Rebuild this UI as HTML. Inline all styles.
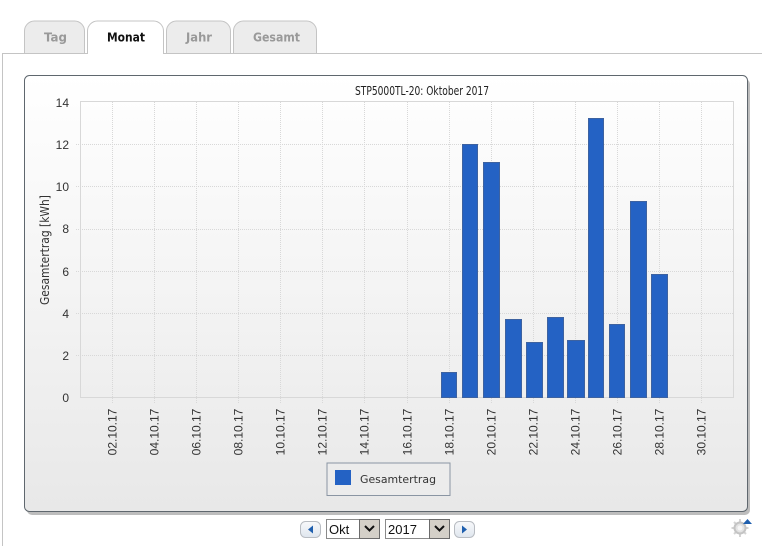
<!DOCTYPE html>
<html><head><meta charset="utf-8"><style>
html,body{margin:0;padding:0;width:762px;height:546px;overflow:hidden;background:#fff}
svg{display:block}
text{font-family:"Liberation Sans",sans-serif;fill:#333}
.t{font-family:"DejaVu Sans",sans-serif;font-weight:bold;font-size:12px;fill:#999;text-anchor:middle}
.d{font-family:"DejaVu Sans",sans-serif}
.y{font-size:12px;text-anchor:end;fill:#333}
.x{font-size:12px;fill:#333;text-anchor:middle}
.g{stroke:#d8d8d8;stroke-width:1;stroke-dasharray:1 1;fill:none}
.tab{fill:#ececec;stroke:#c4c4c4;stroke-width:1}
.b{fill:#2462c4;stroke:#3d62a0;stroke-width:1}
</style></head><body>
<svg width="762" height="546" viewBox="0 0 762 546" xmlns="http://www.w3.org/2000/svg">
<defs>
<linearGradient id="p" x1="0" y1="0" x2="0" y2="1"><stop offset="0" stop-color="#fff"/><stop offset="1" stop-color="#e8e8e8"/></linearGradient>
<linearGradient id="btn" x1="0" y1="0" x2="0" y2="1"><stop offset="0" stop-color="#f8f9fb"/><stop offset="1" stop-color="#dfe6ee"/></linearGradient>
</defs>
<path d="M2.500 546V53.500H762" fill="none" stroke="#c4c4c4"/>
<path class="tab" d="M24.500 53V31a10 10 0 0 1 10-10h40a10 10 0 0 1 10 10v22"/>
<path class="tab" d="M166.500 53V31a10 10 0 0 1 10-10h44a10 10 0 0 1 10 10v22"/>
<path class="tab" d="M233.500 53V31a10 10 0 0 1 10-10h63a10 10 0 0 1 10 10v22"/>
<path d="M87.500 54V31a10 10 0 0 1 10-10h56a10 10 0 0 1 10 10v23" fill="#fff" stroke="#c4c4c4"/>
<text class="t" x="55.500" y="41.500" textLength="23" lengthAdjust="spacingAndGlyphs">Tag</text>
<text class="t" x="126" y="41.500" textLength="38" lengthAdjust="spacingAndGlyphs" style="fill:#111">Monat</text>
<text class="t" x="199" y="41.500" textLength="26" lengthAdjust="spacingAndGlyphs">Jahr</text>
<text class="t" x="276.500" y="41.500" textLength="47" lengthAdjust="spacingAndGlyphs">Gesamt</text>

<rect x="27" y="79" width="723" height="436" rx="5" fill="#bdbdbd"/>
<rect x="24.500" y="75.500" width="723" height="436" rx="5" fill="url(#p)" stroke="#5f676e"/>
<text class="d" x="355" y="95" textLength="134" lengthAdjust="spacingAndGlyphs" style="font-size:12px;fill:#222">STP5000TL-20: Oktober 2017</text>

<rect x="80.500" y="101.500" width="653" height="296" fill="none" stroke="#d8d8d8"/>
<path class="g" d="M76 144.500H734M76 186.500H734M76 229.500H734M76 271.500H734M76 313.500H734M76 355.500H734"/>
<path class="g" d="M112.500 102V403M154.500 102V403M196.500 102V403M238.500 102V403M280.500 102V403M322.500 102V403M364.500 102V403M407.500 102V403M449.500 102V403M491.500 102V403M533.500 102V403M575.500 102V403M617.500 102V403M659.500 102V403M701.500 102V403"/>

<text class="y" x="69" y="107">14</text>
<text class="y" x="69" y="149">12</text>
<text class="y" x="69" y="191">10</text>
<text class="y" x="69" y="233">8</text>
<text class="y" x="69" y="276">6</text>
<text class="y" x="69" y="318">4</text>
<text class="y" x="69" y="360">2</text>
<text class="y" x="69" y="402">0</text>
<text class="d" x="0" y="0" transform="translate(49,305) rotate(-90)" textLength="110" lengthAdjust="spacingAndGlyphs" style="font-size:12px;fill:#333">Gesamtertrag [kWh]</text>

<rect class="b" x="441.500" y="372.500" width="15" height="25"/>
<rect class="b" x="462.500" y="144.500" width="15" height="253"/>
<rect class="b" x="483.500" y="162.500" width="16" height="235"/>
<rect class="b" x="505.500" y="319.500" width="16" height="78"/>
<rect class="b" x="526.500" y="342.500" width="16" height="55"/>
<rect class="b" x="547.500" y="317.500" width="16" height="80"/>
<rect class="b" x="567.500" y="340.500" width="17" height="57"/>
<rect class="b" x="588.500" y="118.500" width="15" height="279"/>
<rect class="b" x="609.500" y="324.500" width="15" height="73"/>
<rect class="b" x="630.500" y="201.500" width="16" height="196"/>
<rect class="b" x="651.500" y="274.500" width="16" height="123"/>

<g>
<text class="x" transform="translate(116.500,432) rotate(-90)">02.10.17</text>
<text class="x" transform="translate(158.500,432) rotate(-90)">04.10.17</text>
<text class="x" transform="translate(200.500,432) rotate(-90)">06.10.17</text>
<text class="x" transform="translate(242.500,432) rotate(-90)">08.10.17</text>
<text class="x" transform="translate(284.500,432) rotate(-90)">10.10.17</text>
<text class="x" transform="translate(326.500,432) rotate(-90)">12.10.17</text>
<text class="x" transform="translate(368.500,432) rotate(-90)">14.10.17</text>
<text class="x" transform="translate(411.500,432) rotate(-90)">16.10.17</text>
<text class="x" transform="translate(453.500,432) rotate(-90)">18.10.17</text>
<text class="x" transform="translate(495.500,432) rotate(-90)">20.10.17</text>
<text class="x" transform="translate(537.500,432) rotate(-90)">22.10.17</text>
<text class="x" transform="translate(579.500,432) rotate(-90)">24.10.17</text>
<text class="x" transform="translate(621.500,432) rotate(-90)">26.10.17</text>
<text class="x" transform="translate(663.500,432) rotate(-90)">28.10.17</text>
<text class="x" transform="translate(705.500,432) rotate(-90)">30.10.17</text>
</g>

<rect x="327" y="463" width="123" height="32.500" fill="#ececec" stroke="#8a95a3"/>
<rect x="335" y="470" width="16" height="15" fill="#2462c4"/>
<text class="d" x="360" y="483" textLength="76" lengthAdjust="spacingAndGlyphs" style="font-size:11px;fill:#333">Gesamtertrag</text>

<rect x="300.500" y="521.500" width="20" height="16" rx="5" fill="url(#btn)" stroke="#b8bcc2"/>
<path d="M313 525.500v8l-5-4z" fill="#1f5fae"/>
<rect x="454.500" y="521.500" width="20" height="16" rx="5" fill="url(#btn)" stroke="#b8bcc2"/>
<path d="M462 525.500v8l5-4z" fill="#1f5fae"/>

<rect x="326.500" y="519.500" width="53" height="19" fill="#fff" stroke="#8a8a8a"/>
<text x="329" y="534" style="font-size:13px;fill:#111">Okt</text>
<rect x="359.500" y="519.500" width="20" height="19" fill="#d4d0c8" stroke="#6b6b6b"/>
<path d="M365 526l4.500 4.500 4.500-4.500" fill="none" stroke="#111" stroke-width="2"/>

<rect x="385.500" y="519.500" width="64" height="19" fill="#fff" stroke="#8a8a8a"/>
<text x="388" y="534" style="font-size:13px;fill:#111">2017</text>
<rect x="429.500" y="519.500" width="20" height="19" fill="#d4d0c8" stroke="#6b6b6b"/>
<path d="M435 526l4.500 4.500 4.500-4.500" fill="none" stroke="#111" stroke-width="2"/>

<path d="M740 519v18M731.500 528h17M734 522l12 12M746 522l-12 12" stroke="#d4d4d4" stroke-width="2"/>
<circle cx="740" cy="528" r="5.500" fill="#e4e4e4" stroke="#c4c4c4" stroke-width="2"/>
<circle cx="740" cy="528" r="2.500" fill="#f6f6f6"/>
<path d="M743 524l4.500-5 4.500 5z" fill="#1f5fae"/>
</svg>
</body></html>
